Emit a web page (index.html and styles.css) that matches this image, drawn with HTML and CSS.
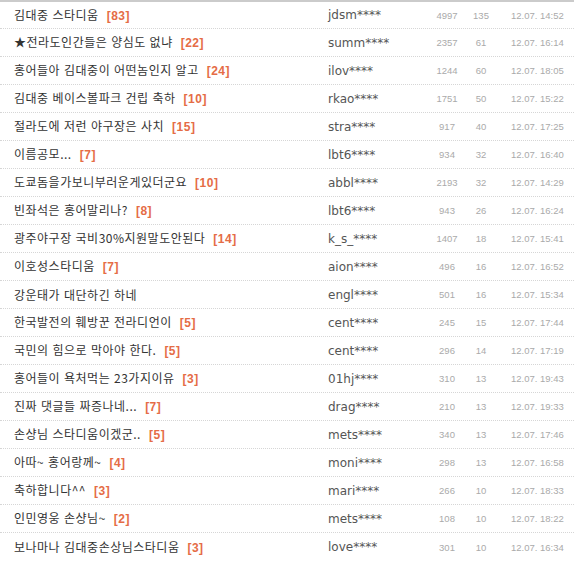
FILE: index.html
```html
<!DOCTYPE html>
<html lang="ko">
<head>
<meta charset="utf-8">
<link rel="stylesheet" href="styles.css">
</head>
<body>
<ul class="list">
  <li class="row"><span class="title">김대중 스타디움<b class="cnt">[83]</b></span><span class="author">jdsm****</span><span class="num">4997</span><span class="num">135</span><span class="date">12.07. 14:52</span></li>
  <li class="row"><span class="title">★전라도인간들은 양심도 없냐<b class="cnt">[22]</b></span><span class="author">summ****</span><span class="num">2357</span><span class="num">61</span><span class="date">12.07. 16:14</span></li>
  <li class="row"><span class="title">홍어들아 김대중이 어떤놈인지 알고<b class="cnt">[24]</b></span><span class="author">ilov****</span><span class="num">1244</span><span class="num">60</span><span class="date">12.07. 18:05</span></li>
  <li class="row"><span class="title">김대중 베이스볼파크 건립 축하<b class="cnt">[10]</b></span><span class="author">rkao****</span><span class="num">1751</span><span class="num">50</span><span class="date">12.07. 15:22</span></li>
  <li class="row"><span class="title">절라도에 저런 야구장은 사치<b class="cnt">[15]</b></span><span class="author">stra****</span><span class="num">917</span><span class="num">40</span><span class="date">12.07. 17:25</span></li>
  <li class="row"><span class="title">이름공모...<b class="cnt">[7]</b></span><span class="author">lbt6****</span><span class="num">934</span><span class="num">32</span><span class="date">12.07. 16:40</span></li>
  <li class="row"><span class="title">도쿄돔을가보니부러운게있더군요<b class="cnt">[10]</b></span><span class="author">abbl****</span><span class="num">2193</span><span class="num">32</span><span class="date">12.07. 14:29</span></li>
  <li class="row"><span class="title">빈좌석은 홍어말리나?<b class="cnt">[8]</b></span><span class="author">lbt6****</span><span class="num">943</span><span class="num">26</span><span class="date">12.07. 16:24</span></li>
  <li class="row"><span class="title">광주야구장 국비30%지원말도안된다<b class="cnt">[14]</b></span><span class="author">k_s_****</span><span class="num">1407</span><span class="num">18</span><span class="date">12.07. 15:41</span></li>
  <li class="row"><span class="title">이호성스타디움<b class="cnt">[7]</b></span><span class="author">aion****</span><span class="num">496</span><span class="num">16</span><span class="date">12.07. 16:52</span></li>
  <li class="row"><span class="title">강운태가 대단하긴 하네</span><span class="author">engl****</span><span class="num">501</span><span class="num">16</span><span class="date">12.07. 15:34</span></li>
  <li class="row"><span class="title">한국발전의 훼방꾼 전라디언이<b class="cnt">[5]</b></span><span class="author">cent****</span><span class="num">245</span><span class="num">15</span><span class="date">12.07. 17:44</span></li>
  <li class="row"><span class="title">국민의 힘으로 막아야 한다.<b class="cnt">[5]</b></span><span class="author">cent****</span><span class="num">296</span><span class="num">14</span><span class="date">12.07. 17:19</span></li>
  <li class="row"><span class="title">홍어들이 욕처먹는 23가지이유<b class="cnt">[3]</b></span><span class="author">01hj****</span><span class="num">310</span><span class="num">13</span><span class="date">12.07. 19:43</span></li>
  <li class="row"><span class="title">진짜 댓글들 짜증나네...<b class="cnt">[7]</b></span><span class="author">drag****</span><span class="num">210</span><span class="num">13</span><span class="date">12.07. 19:33</span></li>
  <li class="row"><span class="title">손샹님 스타디움이겠군..<b class="cnt">[5]</b></span><span class="author">mets****</span><span class="num">340</span><span class="num">13</span><span class="date">12.07. 17:46</span></li>
  <li class="row"><span class="title">아따~ 홍어랑께~<b class="cnt">[4]</b></span><span class="author">moni****</span><span class="num">298</span><span class="num">13</span><span class="date">12.07. 16:58</span></li>
  <li class="row"><span class="title">축하합니다^^<b class="cnt">[3]</b></span><span class="author">mari****</span><span class="num">266</span><span class="num">10</span><span class="date">12.07. 18:33</span></li>
  <li class="row"><span class="title">인민영웅 손샹님~<b class="cnt">[2]</b></span><span class="author">mets****</span><span class="num">108</span><span class="num">10</span><span class="date">12.07. 18:22</span></li>
  <li class="row"><span class="title">보나마나 김대중손상님스타디움<b class="cnt">[3]</b></span><span class="author">love****</span><span class="num">301</span><span class="num">10</span><span class="date">12.07. 16:34</span></li>
</ul>
</body>
</html>
```

FILE: styles.css
```css
html, body {
  margin: 0;
  padding: 0;
  background: #fff;
}

.list {
  list-style: none;
  margin: 0;
  padding: 0;
  border-top: 2px solid #cbcbcb;
}

.row {
  display: grid;
  grid-template-columns: 328px 100px 38px 30px 1fr;
  align-items: center;
  height: 28px;
  box-sizing: border-box;
  border-bottom: 1px dotted #d6d6d6;
}

.row:first-child {
  height: 27px;
}

.row:last-child {
  border-bottom: none;
}

.title {
  padding-left: 14px;
  font-family: "Noto Sans CJK KR", "Noto Sans", sans-serif;
  font-size: 12px;
  letter-spacing: 0.5px;
  color: #333;
  white-space: nowrap;
  line-height: 16px;
}

.cnt {
  margin-left: 8px;
  font-family: "Liberation Sans", Arial, sans-serif;
  font-weight: bold;
  font-size: 12px;
  letter-spacing: 0.5px;
  color: #e56c46;
}

.author {
  font-family: "DejaVu Sans", sans-serif;
  font-size: 12px;
  color: #555;
  white-space: nowrap;
}

.num {
  text-align: center;
  font-family: "Liberation Sans", Arial, sans-serif;
  font-size: 9.5px;
  color: #aaa;
}

.date {
  padding-left: 15px;
  font-family: "Liberation Sans", Arial, sans-serif;
  font-size: 9.5px;
  color: #aaa;
  white-space: nowrap;
}
```
